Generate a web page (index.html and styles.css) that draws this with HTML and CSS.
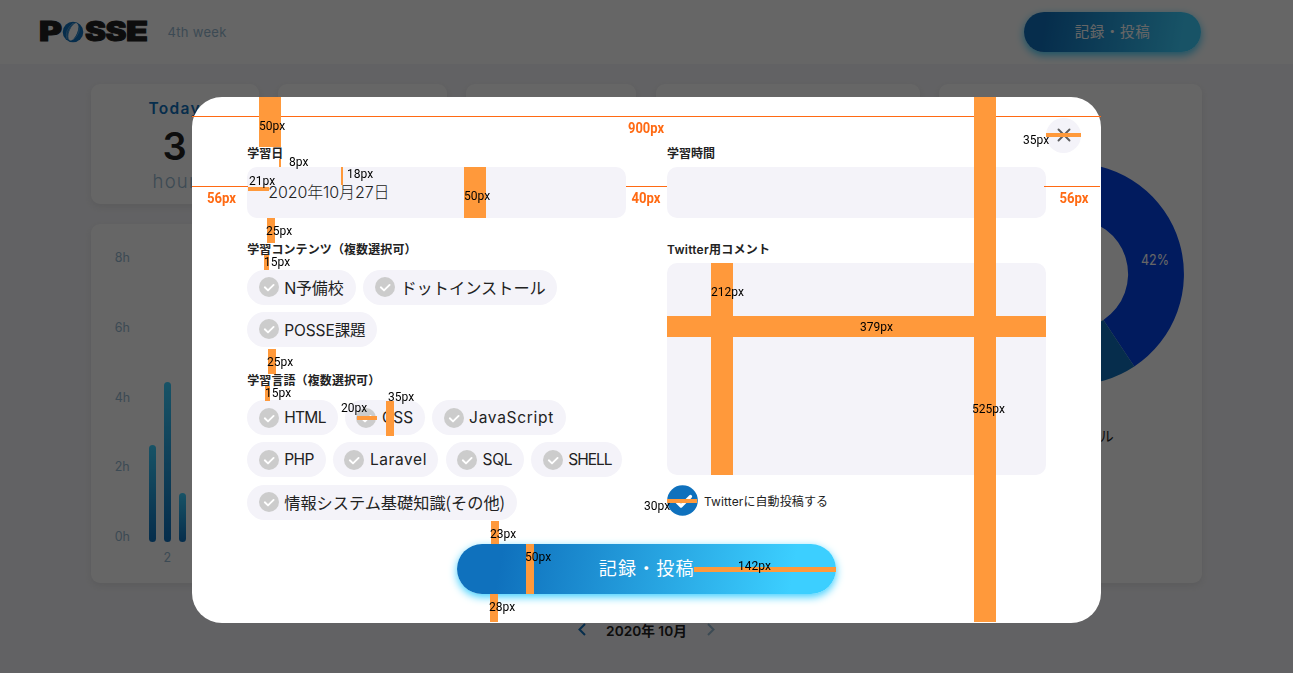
FILE: index.html
```html
<!DOCTYPE html>
<html lang="ja">
<head>
<meta charset="utf-8">
<title>POSSE</title>
<link rel="stylesheet" href="styles.css">
</head>
<body>
<svg class="defs" width="0" height="0">
  <symbol id="check" viewBox="0 0 20 20">
    <circle cx="10" cy="10" r="10"/>
    <path d="M5.8 10.3l3.2 3.1 5.6-5.5" fill="none" stroke="#fff" stroke-width="1.9" stroke-linecap="round" stroke-linejoin="round"/>
  </symbol>
</svg>
<div class="page">
  <header class="header">
    <svg class="logo" width="108" height="22" viewBox="0 0 108 22">
      <g class="logo-text">
        <text x="-1" y="20.3" textLength="23" lengthAdjust="spacingAndGlyphs">P</text>
        <text x="45" y="20.3" textLength="21" lengthAdjust="spacingAndGlyphs">S</text>
        <text x="65.5" y="20.3" textLength="21" lengthAdjust="spacingAndGlyphs">S</text>
        <text x="86" y="20.3" textLength="22" lengthAdjust="spacingAndGlyphs">E</text>
      </g>
      <circle cx="33" cy="11" r="10.300" fill="#0f71bd"/>
      <ellipse cx="33.300" cy="10.800" rx="4" ry="9.300" fill="#fff" transform="rotate(22 33.300 10.800)"/>
      <path d="M27 18Q24 10 33 2M29 19Q25 12 34 2M38 4Q42 11 33 19" fill="none" stroke="#9cc6e5" stroke-width=".5"/>
    </svg>
    <span class="week">4th week</span>
    <button class="header-button">記録・投稿</button>
  </header>
  <main class="board">
    <section class="card today">
      <span class="today-title">Today</span>
      <span class="today-value">3</span>
      <span class="today-unit">hour</span>
    </section>
    <section class="card"></section>
    <section class="card"></section>
    <section class="card tall"></section>
    <section class="card tall donut-card">
      <svg class="donut" width="222" height="222" viewBox="-111 -111 222 222">
        <path d="M0-111A111 111 0 0 1 61.300 92.500L30.400 45.900A55 55 0 0 0 0-55Z" fill="#0345ec"/>
        <path d="M61.300 92.500A111 111 0 0 1-61.300 92.500L-30.400 45.900A55 55 0 0 0 30.400 45.900Z" fill="#0f71bd"/>
        <text class="donut-label" x="68" y="-9" textLength="28" lengthAdjust="spacingAndGlyphs">42%</text>
      </svg>
      <span class="legend">ドットインストール</span>
    </section>
    <section class="card chart">
      <div class="axis"><span>8h</span><span>6h</span><span>4h</span><span>2h</span><span>0h</span></div>
      <div class="plot">
        <div class="bars"><i class="bar" style="height:97px"></i><i class="bar" style="height:160px"></i><i class="bar" style="height:49px"></i></div>
        <span class="day">2</span>
      </div>
    </section>
  </main>
  <nav class="month">
    <svg width="8" height="13" viewBox="0 0 8 13"><path d="M7 1L1.500 6.500 7 12" fill="none" stroke="#0f71bd" stroke-width="2"/></svg>
    <span>2020年 10月</span>
    <svg width="8" height="13" viewBox="0 0 8 13"><path d="M1 1l5.500 5.500L1 12" fill="none" stroke="#97b9d1" stroke-width="2"/></svg>
  </nav>
</div>
<div class="overlay"></div>
<div class="modal">
  <div class="close"><svg width="14" height="14" viewBox="0 0 14 14"><path d="M1.500 1.500l11 11M12.500 1.500l-11 11" stroke="#5c5c5e" stroke-width="1.900" stroke-linecap="round"/></svg></div>
  <div class="columns">
    <div class="column">
      <h2 class="label">学習日</h2>
      <div class="input date">2020年10月27日</div>
      <h2 class="label spaced">学習コンテンツ（複数選択可）</h2>
      <div class="chips">
        <span class="chip w-n"><svg><use href="#check"/></svg>N予備校</span>
        <span class="chip w-dot"><svg><use href="#check"/></svg>ドットインストール</span>
        <span class="chip w-posse"><svg><use href="#check"/></svg>POSSE課題</span>
      </div>
      <h2 class="label spaced">学習言語（複数選択可）</h2>
      <div class="chips">
        <span class="chip w-html"><svg><use href="#check"/></svg>HTML</span>
        <span class="chip w-css"><svg><use href="#check"/></svg>CSS</span>
        <span class="chip w-js"><svg><use href="#check"/></svg>JavaScript</span>
        <span class="chip w-php"><svg><use href="#check"/></svg>PHP</span>
        <span class="chip w-laravel"><svg><use href="#check"/></svg>Laravel</span>
        <span class="chip w-sql"><svg><use href="#check"/></svg>SQL</span>
        <span class="chip w-shell"><svg><use href="#check"/></svg>SHELL</span>
        <span class="chip w-other"><svg><use href="#check"/></svg>情報システム基礎知識(その他)</span>
      </div>
    </div>
    <div class="column">
      <h2 class="label">学習時間</h2>
      <div class="input"></div>
      <h2 class="label spaced twitter">Twitter用コメント</h2>
      <div class="textarea"></div>
      <div class="share">
        <svg width="31" height="31" viewBox="0 0 31 31"><circle cx="15.500" cy="15.500" r="15.300" fill="#0f71bd"/><path d="M9 16l5 5 9.500-9.500" fill="none" stroke="#fff" stroke-width="3.200" stroke-linecap="round" stroke-linejoin="round"/></svg>
        <span>Twitterに自動投稿する</span>
      </div>
    </div>
  </div>
  <button class="submit">記録・投稿</button>
</div>
<svg class="measures" width="1293" height="673" viewBox="0 0 1293 673">
  <g class="lines">
    <path d="M192 116.500H1101M192 186.500H248M626 186.500H667M1044 186.500H1100"/>
  </g>
  <g class="blocks">
    <rect x="259" y="97" width="22" height="50"/>
    <rect x="279" y="159" width="2" height="8"/>
    <rect x="341" y="167" width="2" height="18"/>
    <rect x="464" y="167" width="22" height="51"/>
    <rect x="248" y="187" width="21" height="4"/>
    <rect x="267" y="218" width="8" height="25"/>
    <rect x="264" y="255" width="5" height="15"/>
    <rect x="268" y="349" width="8" height="25"/>
    <rect x="265" y="386" width="5" height="15"/>
    <rect x="357" y="416" width="20" height="4"/>
    <rect x="386" y="401" width="8" height="35"/>
    <rect x="491" y="521" width="8" height="23"/>
    <rect x="526" y="544" width="8" height="50"/>
    <rect x="490" y="594" width="8" height="28"/>
    <rect x="694" y="567" width="142" height="5"/>
    <rect x="711" y="263" width="22" height="212"/>
    <rect x="667" y="316" width="379" height="21"/>
    <rect x="974" y="97" width="22" height="525"/>
    <rect x="667" y="499" width="30" height="4"/>
    <rect x="1046" y="133" width="35" height="4"/>
  </g>
  <g class="sizes">
    <text x="259" y="130">50px</text>
    <text x="289" y="166">8px</text>
    <text x="347" y="178">18px</text>
    <text x="464" y="200">50px</text>
    <text x="249" y="185">21px</text>
    <text x="266" y="235">25px</text>
    <text x="264" y="266">15px</text>
    <text x="267" y="366">25px</text>
    <text x="265" y="397">15px</text>
    <text x="341" y="412">20px</text>
    <text x="388" y="401">35px</text>
    <text x="490" y="538">23px</text>
    <text x="525" y="561">50px</text>
    <text x="489" y="611">28px</text>
    <text x="738" y="570">142px</text>
    <text x="711" y="296">212px</text>
    <text x="860" y="331">379px</text>
    <text x="972" y="413">525px</text>
    <text x="644" y="510">30px</text>
    <text x="1023" y="144">35px</text>
  </g>
  <g class="widths">
    <text x="628" y="133" textLength="36" lengthAdjust="spacingAndGlyphs">900px</text>
    <text x="207" y="203" textLength="29" lengthAdjust="spacingAndGlyphs">56px</text>
    <text x="631.500" y="203" textLength="29" lengthAdjust="spacingAndGlyphs">40px</text>
    <text x="1059.500" y="203" textLength="29" lengthAdjust="spacingAndGlyphs">56px</text>
  </g>
</svg>
</body>
</html>
```
FILE: styles.css
```css
* { box-sizing: border-box; }
body { margin: 0; overflow: hidden; font-family: Inter, "Noto Sans CJK JP", sans-serif; color: #222; }
button { border: 0; padding: 0; font-family: "Noto Sans CJK JP", sans-serif; color: #fff; background: linear-gradient(100deg, #0f71bd 12%, #3ccfff 88%); }
.defs { position: absolute; }
.page { height: 673px; background: #f5f5f9; }
.header { height: 64px; background: #fff; display: flex; align-items: center; padding: 0 92px 0 39.500px; }
.logo { overflow: visible; }
.logo-text { font: 900 26.500px Inter, sans-serif; fill: #222; stroke: #222; stroke-width: 1; }
.week { margin-left: 20px; font-size: 13px; letter-spacing: .3px; color: #97b9d1; }
.header-button { margin-left: auto; width: 177px; height: 40px; padding-bottom: 3px; border-radius: 20px; font-size: 14.500px; letter-spacing: .6px; box-shadow: 0 3px 8px #3ccfff; }
.board { display: grid; grid-template-columns: 168px 169px 170px 264px 263px; grid-template-rows: 120px 359px; column-gap: 19.300px; row-gap: 20px; padding: 20px 0 0 90.700px; }
.card { background: #fff; border-radius: 9px; box-shadow: 0 3px 7px #e3e3e6; }
.tall { grid-row: 1 / 3; }
.tall:nth-child(4) { grid-column: 4; }
.donut-card { grid-column: 5; padding: 79px 0 0 23px; }
.donut { display: block; }
.donut-label { font-size: 14.500px; fill: #fff; }
.legend { display: block; width: 152px; margin-top: 40px; text-align: right; font: 14px/20px "Noto Sans CJK JP", sans-serif; }
.today { display: flex; flex-direction: column; align-items: center; }
.today-title { margin-top: 15px; font-size: 15.500px; line-height: 20px; font-weight: 600; letter-spacing: 1.300px; color: #0f71bd; }
.today-value { margin-top: 3px; font-size: 38px; line-height: 48px; font-weight: 600; }
.today-unit { font-size: 18.500px; line-height: 22px; font-weight: 300; letter-spacing: 1.200px; color: #97b9d1; }
.chart { grid-column: 1 / 4; grid-row: 2; display: flex; padding: 24px 0 0 24px; font-size: 12.500px; color: #97b9d1; }
.axis { width: 34px; height: 298px; display: flex; flex-direction: column; justify-content: space-between; line-height: 19px; }
.bars { height: 294px; display: flex; align-items: flex-end; gap: 8px; }
.bar { width: 7px; border-radius: 4px; background: linear-gradient(#3ccfff, #0f71bd); }
.day { display: block; width: 37px; text-align: center; margin-top: 8px; }
.month { display: flex; justify-content: center; align-items: center; gap: 20px; height: 20px; margin-top: 36.500px; font-size: 13.700px; font-weight: 600; }
.overlay { position: fixed; inset: 0; background: rgba(0, 0, 0, .6); }
.modal { position: fixed; left: 192px; top: 97px; width: 909px; height: 525.500px; border-radius: 30px; background: #fff; padding: 50px 55px 0 55.500px; }
.close { position: absolute; left: 854px; top: 20.500px; width: 35px; height: 35px; border-radius: 50%; background: #f4f3f9; display: flex; align-items: center; justify-content: center; }
.columns { display: flex; gap: 40.800px; height: 396.500px; margin-left: -.3px; }
.column { width: 379px; flex: none; }
.label { margin: 0 0 8px; height: 12px; font-size: 12px; line-height: 13px; font-weight: 600; white-space: nowrap; color: #222; }
.label.spaced { margin: 25px 0 15.500px; height: 12px; letter-spacing: .1px; }
.label.twitter { margin-bottom: 8.500px; letter-spacing: .25px; }
.input { height: 50.500px; border-radius: 10px; background: #f4f3f9; padding: 0 21px; line-height: 51px; font-size: 16px; }
.date { letter-spacing: -.1px; font-weight: 300; }
.textarea { height: 212px; border-radius: 10px; background: #f4f3f9; }
.chips { display: flex; flex-wrap: wrap; gap: 7.200px; }
.label.spaced + .chips { margin-bottom: 26.500px; }
.chips + .label.spaced { margin: 0 0 14.500px; }
.chip { height: 35px; border-radius: 18px; background: #f4f3f9; display: flex; align-items: center; padding-left: 11.500px; white-space: nowrap; font-size: 15.500px; }
.chip svg { width: 20px; height: 20px; margin-right: 5.500px; fill: #ccc; flex: none; }
.w-n { width: 109px; font-size: 16px; letter-spacing: -.2px; padding-bottom: 1px; }
.w-dot { width: 194px; font-size: 16.200px; padding-bottom: 1px; }
.w-posse { width: 130px; margin-right: 150px; letter-spacing: -.1px; padding-bottom: 1px; }
.w-html { width: 90.500px; letter-spacing: -.7px; }
.w-css { width: 80px; }
.w-js { width: 134px; margin-right: 40px; letter-spacing: .7px; }
.w-php { width: 78.500px; letter-spacing: -.5px; }
.w-laravel { width: 105.500px; letter-spacing: .6px; }
.w-sql { width: 78.500px; letter-spacing: -.3px; }
.w-shell { width: 91px; letter-spacing: -1px; }
.w-other { width: 269.500px; font-family: "Noto Sans CJK JP", sans-serif; font-size: 16.200px; padding-bottom: 1px; }
.share { display: flex; align-items: center; gap: 6px; margin-top: 10px; font-size: 12px; letter-spacing: .1px; }
.submit { display: block; width: 379px; height: 50.500px; margin: 0 auto; padding-bottom: 3px; border-radius: 26px; font-size: 18px; letter-spacing: 1.200px; box-shadow: 0 3px 9px #3ccfff; }
.measures { position: absolute; left: 0; top: 0; }
.lines { stroke: #ff6a13; stroke-width: 1.200; }
.blocks { fill: #ff993b; }
.sizes { font: 12px Roboto, sans-serif; fill: #000; }
.widths { font: bold 14px Roboto, sans-serif; fill: #ff6a13; }
```
